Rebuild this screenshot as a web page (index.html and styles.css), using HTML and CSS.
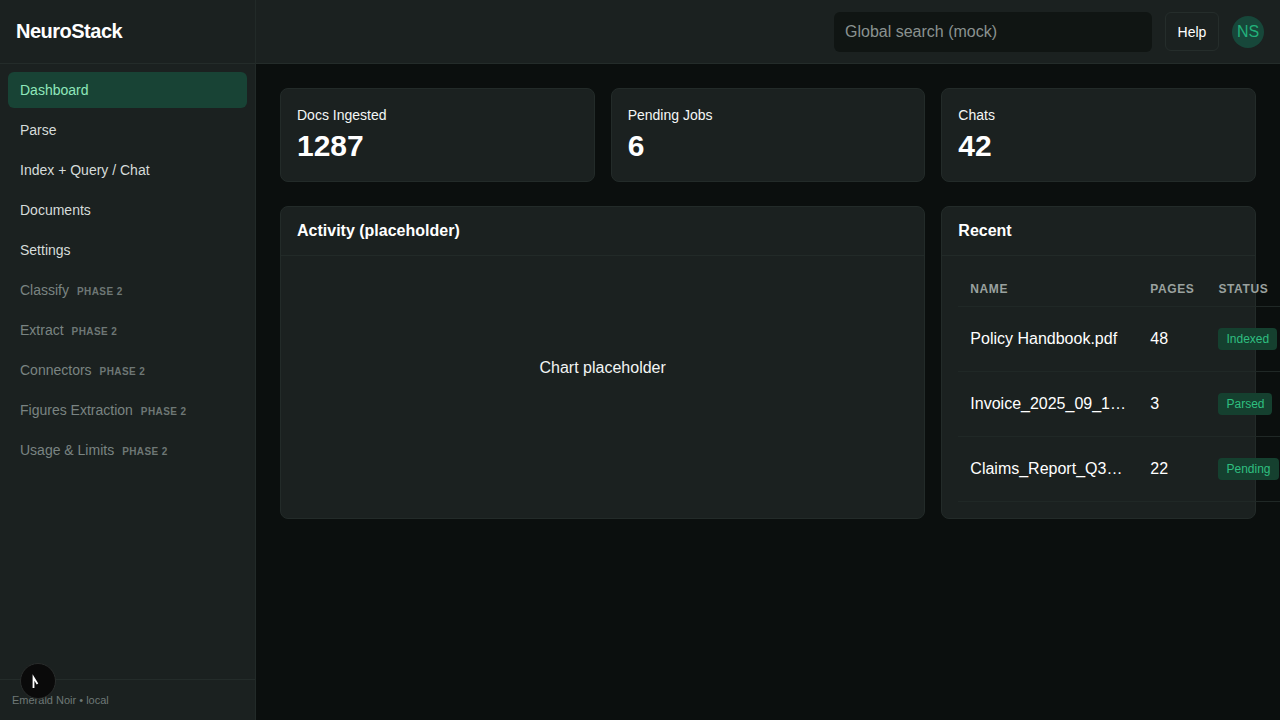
FILE: index.html
```html
<!DOCTYPE html>
<html lang="en">
<head>
<meta charset="utf-8">
<title>NeuroStack</title>
<link rel="stylesheet" href="styles.css">
</head>
<body>
<div class="app">
  <aside class="sidebar">
    <div class="brand">NeuroStack</div>
    <nav class="nav">
      <a class="nav-item active">Dashboard</a>
      <a class="nav-item">Parse</a>
      <a class="nav-item">Index + Query / Chat</a>
      <a class="nav-item">Documents</a>
      <a class="nav-item">Settings</a>
      <a class="nav-item muted">Classify <span class="tag">Phase 2</span></a>
      <a class="nav-item muted">Extract <span class="tag">Phase 2</span></a>
      <a class="nav-item muted">Connectors <span class="tag">Phase 2</span></a>
      <a class="nav-item muted">Figures Extraction <span class="tag">Phase 2</span></a>
      <a class="nav-item muted">Usage &amp; Limits <span class="tag">Phase 2</span></a>
    </nav>
    <div class="side-footer">Emerald Noir • local</div>
  </aside>
  <div class="main-wrap">
    <header class="topbar">
      <div class="search">Global search (mock)</div>
      <button class="help">Help</button>
      <div class="avatar">NS</div>
    </header>
    <main class="main">
      <section class="stats">
        <div class="card stat"><div class="stat-label">Docs Ingested</div><div class="stat-value">1287</div></div>
        <div class="card stat"><div class="stat-label">Pending Jobs</div><div class="stat-value">6</div></div>
        <div class="card stat"><div class="stat-label">Chats</div><div class="stat-value">42</div></div>
      </section>
      <section class="panels">
        <div class="card panel activity">
          <div class="panel-head">Activity (placeholder)</div>
          <div class="panel-body"><div class="chart">Chart placeholder</div></div>
        </div>
        <div class="card panel recent">
          <div class="panel-head">Recent</div>
          <div class="panel-body">
            <table class="table">
              <thead>
                <tr><th class="c-name">Name</th><th class="c-pages">Pages</th><th class="c-status">Status</th></tr>
              </thead>
              <tbody>
                <tr><td class="c-name"><span class="ellip">Policy Handbook.pdf</span></td><td>48</td><td><span class="badge">Indexed</span></td></tr>
                <tr><td class="c-name"><span class="ellip">Invoice_2025_09_14.pdf</span></td><td>3</td><td><span class="badge">Parsed</span></td></tr>
                <tr><td class="c-name"><span class="ellip">Claims_Report_Q3.xlsx</span></td><td>22</td><td><span class="badge">Pending</span></td></tr>
              </tbody>
            </table>
          </div>
        </div>
      </section>
    </main>
  </div>
</div>
<div class="dev-dot">
  <svg width="14" height="14" viewBox="0 0 14 14"><path d="M2.5 14 V3.5 L6.5 10" fill="none" stroke="#fff" stroke-width="1.8" stroke-linecap="butt" stroke-linejoin="miter"/></svg>
</div>
</body>
</html>
```
FILE: styles.css
```css
* { box-sizing: border-box; }
html, body { margin: 0; padding: 0; height: 100%; overflow: hidden; }
body {
  font-family: "Liberation Sans", Arial, sans-serif;
  background: #0b0f0e;
  color: #f2f5f4;
}
.app { display: flex; height: 720px; }
.sidebar {
  width: 256px;
  flex: none;
  background: #1b2120;
  border-right: 1px solid #222a28;
  display: flex;
  flex-direction: column;
}
.brand {
  height: 64px;
  padding: 0 16px;
  display: flex;
  align-items: center;
  font-size: 20px;
  font-weight: 700;
  letter-spacing: -0.5px;
  color: #ffffff;
  border-bottom: 1px solid #242c2a;
}
.nav {
  flex: 1;
  padding: 8px;
  display: flex;
  flex-direction: column;
  gap: 4px;
}
.nav-item {
  height: 36px;
  padding: 0 12px;
  display: flex;
  align-items: center;
  font-size: 14px;
  color: #d6dcda;
  border-radius: 6px;
}
.nav-item.active { background: #184335; color: #8fe8bb; }
.nav-item.muted { color: #7a8482; }
.tag {
  margin-left: 8px;
  font-size: 10px;
  font-weight: 700;
  text-transform: uppercase;
  letter-spacing: 0.4px;
  color: #6e7775;
  position: relative;
  top: 1px;
}
.side-footer {
  height: 41px;
  border-top: 1px solid #242c2a;
  padding: 14px 12px 0;
  font-size: 11px;
  color: #6e7876;
}
.main-wrap { flex: 1; display: flex; flex-direction: column; min-width: 0; }
.topbar {
  height: 64px;
  flex: none;
  background: #1b2120;
  border-bottom: 1px solid #242c2a;
  display: flex;
  align-items: center;
  justify-content: flex-end;
  padding: 0 16px;
  gap: 13px;
}
.search {
  width: 318px;
  height: 40px;
  background: #101513;
  border-radius: 6px;
  padding: 0 11px;
  display: flex;
  align-items: center;
  font-size: 16px;
  color: #8a9290;
}
.help {
  height: 39px;
  width: 54px;
  background: transparent;
  border: 1px solid #252d2b;
  border-radius: 6px;
  color: #ffffff;
  font-family: inherit;
  font-size: 14px;
  padding: 0;
}
.avatar {
  width: 32px;
  height: 32px;
  border-radius: 50%;
  background: #17473a;
  color: #22b07a;
  font-size: 16px;
  display: flex;
  align-items: center;
  justify-content: center;
}
.main { padding: 24px 24px 0; }
.stats {
  display: grid;
  grid-template-columns: repeat(3, minmax(0, 1fr));
  gap: 16px;
}
.card {
  background: #1b2120;
  border: 1px solid #232b29;
  border-radius: 8px;
}
.stat { height: 94px; padding: 18px 16px 0; }
.stat-label { font-size: 14px; color: #f4f7f6; }
.stat-value { font-size: 30px; font-weight: 700; color: #ffffff; margin-top: 6px; }
.panels {
  margin-top: 24px;
  display: grid;
  grid-template-columns: repeat(3, minmax(0, 1fr));
  gap: 16px;
}
.activity { grid-column: span 2; }
.panel-head {
  height: 49px;
  padding: 0 16px;
  display: flex;
  align-items: center;
  font-size: 16px;
  font-weight: 700;
  color: #ffffff;
  border-bottom: 1px solid #222a28;
}
.panel-body { padding: 16px; }
.chart {
  height: 192px;
  display: flex;
  align-items: center;
  justify-content: center;
  font-size: 16px;
  color: #f2f5f4;
}
.table {
  border-collapse: collapse;
  width: 340px;
  font-size: 16px;
}
.table th {
  height: 34px;
  text-align: left;
  padding: 0 12px;
  font-size: 12px;
  font-weight: 700;
  text-transform: uppercase;
  letter-spacing: 0.6px;
  color: #9aa19f;
  border-bottom: 1px solid #202826;
  vertical-align: middle;
}
.table td {
  height: 65px;
  padding: 0 12px;
  border-bottom: 1px solid #202826;
  color: #ffffff;
  vertical-align: middle;
  white-space: nowrap;
}
.c-name { width: 180px; }
.c-pages { width: 68px; }
.ellip {
  display: block;
  max-width: 156px;
  overflow: hidden;
  text-overflow: ellipsis;
  white-space: nowrap;
}
.badge {
  display: inline-block;
  background: #15402f;
  color: #2fbf80;
  font-size: 12px;
  line-height: 14px;
  padding: 4px 8px;
  border-radius: 4px;
}
.dev-dot {
  position: fixed;
  left: 20px;
  top: 663px;
  width: 36px;
  height: 36px;
  border-radius: 50%;
  background: #0a0a0a;
  border: 1px solid #2a2d2c;
  display: flex;
  align-items: center;
  justify-content: center;
}
```
